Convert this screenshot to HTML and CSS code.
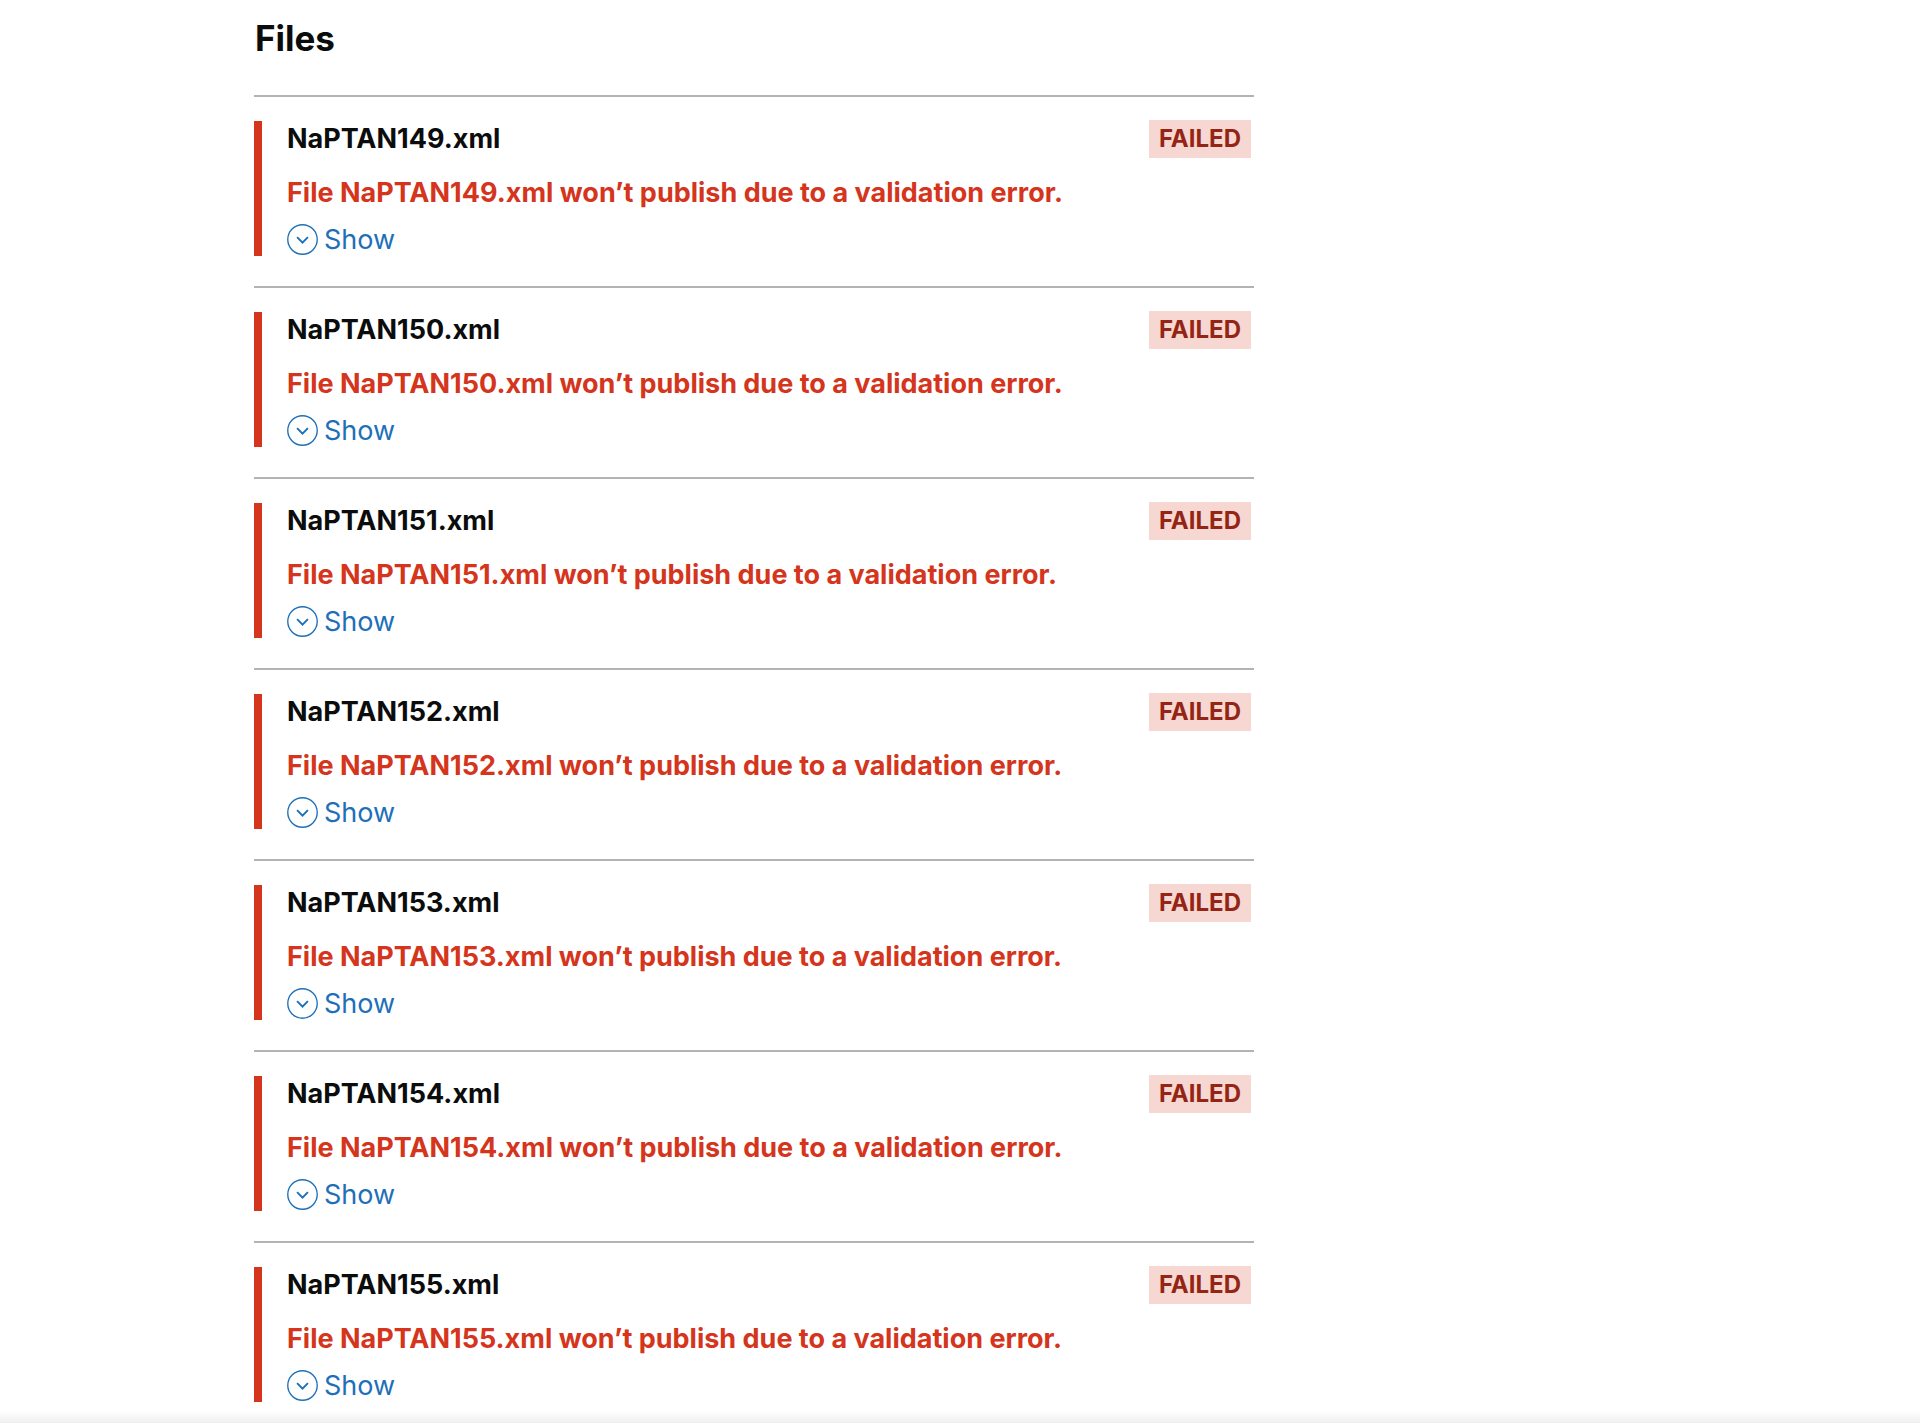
FILE: index.html
```
<!DOCTYPE html>
<html lang="en">
<head>
<meta charset="utf-8">
<title>Files</title>
<link rel="stylesheet" href="styles.css">
</head>
<body>
<svg class="sprite" aria-hidden="true">
  <symbol id="chevron" viewBox="0 0 32 32">
    <circle cx="16" cy="16" r="15.2" fill="none" stroke="currentColor" stroke-width="1.4"/>
    <path d="M10.4 13.6 16 19.2l5.600-5.600" fill="none" stroke="currentColor" stroke-width="2"/>
  </symbol>
</svg>
<main class="page">
  <h1 class="title">Files</h1>
  <ul class="files">
    <li class="file"><div class="file-body">
      <div class="file-head"><h2 class="file-name">NaPTAN149.xml</h2><strong class="tag">FAILED</strong></div>
      <p class="file-error">File NaPTAN149.xml won’t publish due to a validation error.</p>
      <button class="toggle" type="button"><svg class="toggle-icon" aria-hidden="true"><use href="#chevron"/></svg>Show</button>
    </div></li>
    <li class="file"><div class="file-body">
      <div class="file-head"><h2 class="file-name">NaPTAN150.xml</h2><strong class="tag">FAILED</strong></div>
      <p class="file-error">File NaPTAN150.xml won’t publish due to a validation error.</p>
      <button class="toggle" type="button"><svg class="toggle-icon" aria-hidden="true"><use href="#chevron"/></svg>Show</button>
    </div></li>
    <li class="file"><div class="file-body">
      <div class="file-head"><h2 class="file-name">NaPTAN151.xml</h2><strong class="tag">FAILED</strong></div>
      <p class="file-error">File NaPTAN151.xml won’t publish due to a validation error.</p>
      <button class="toggle" type="button"><svg class="toggle-icon" aria-hidden="true"><use href="#chevron"/></svg>Show</button>
    </div></li>
    <li class="file"><div class="file-body">
      <div class="file-head"><h2 class="file-name">NaPTAN152.xml</h2><strong class="tag">FAILED</strong></div>
      <p class="file-error">File NaPTAN152.xml won’t publish due to a validation error.</p>
      <button class="toggle" type="button"><svg class="toggle-icon" aria-hidden="true"><use href="#chevron"/></svg>Show</button>
    </div></li>
    <li class="file"><div class="file-body">
      <div class="file-head"><h2 class="file-name">NaPTAN153.xml</h2><strong class="tag">FAILED</strong></div>
      <p class="file-error">File NaPTAN153.xml won’t publish due to a validation error.</p>
      <button class="toggle" type="button"><svg class="toggle-icon" aria-hidden="true"><use href="#chevron"/></svg>Show</button>
    </div></li>
    <li class="file"><div class="file-body">
      <div class="file-head"><h2 class="file-name">NaPTAN154.xml</h2><strong class="tag">FAILED</strong></div>
      <p class="file-error">File NaPTAN154.xml won’t publish due to a validation error.</p>
      <button class="toggle" type="button"><svg class="toggle-icon" aria-hidden="true"><use href="#chevron"/></svg>Show</button>
    </div></li>
    <li class="file"><div class="file-body">
      <div class="file-head"><h2 class="file-name">NaPTAN155.xml</h2><strong class="tag">FAILED</strong></div>
      <p class="file-error">File NaPTAN155.xml won’t publish due to a validation error.</p>
      <button class="toggle" type="button"><svg class="toggle-icon" aria-hidden="true"><use href="#chevron"/></svg>Show</button>
    </div></li>
  </ul>
</main>
<div class="page-end"></div>
</body>
</html>
```
FILE: styles.css
```
* {
  box-sizing: border-box;
}

body {
  margin: 0;
  background: #fff;
  color: #0b0c0c;
  font-family: Inter, "Liberation Sans", sans-serif;
  font-size: 27px;
  line-height: 36px;
}

.sprite {
  display: none;
}

.page {
  max-width: 1254px;
  padding: 16px 0 0 254px;
}

.title {
  margin: 0 0 35px;
  padding-left: 1px;
  font-size: 35px;
  line-height: 44px;
  font-weight: 700;
}

.files {
  margin: 0;
  padding: 0;
  list-style: none;
}

.file {
  padding: 24px 0 30px;
  border-top: 2px solid #b1b4b6;
}

.file:last-child {
  padding-bottom: 9px;
}

.file-body {
  padding: 0 3px 0 25px;
  border-left: 8px solid #d4351c;
}

.file-head {
  display: flex;
  justify-content: space-between;
  align-items: center;
  height: 36px;
}

.file-name,
.file-error {
  margin: 0;
  font-size: 27px;
  line-height: 36px;
  font-weight: 700;
}

.file-error {
  padding: 18px 0 12px;
  color: #d4351c;
}

.tag {
  padding: 0 10px;
  background: #f6d7d2;
  color: #942514;
  font-size: 24px;
  line-height: 38px;
  font-weight: 700;
}

.toggle {
  display: flex;
  align-items: center;
  gap: 6px;
  height: 33px;
  padding: 0;
  border: 0;
  background: none;
  color: #1d70b8;
  font: inherit;
  line-height: 33px;
  cursor: pointer;
}

.toggle-icon {
  width: 31px;
  height: 31px;
}

.page-end {
  height: 12px;
  background: linear-gradient(#fff, #efefef);
}
```
